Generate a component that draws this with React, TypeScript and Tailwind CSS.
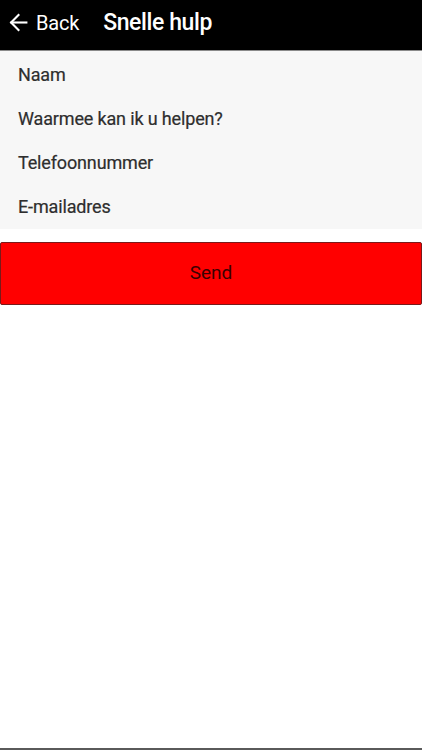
import React from "react";

export default function App() {
  const fields = ["Naam", "Waarmee kan ik u helpen?", "Telefoonnummer", "E-mailadres"];
  return (
    <div
      className="relative w-[422px] h-[750px] bg-white overflow-hidden"
      style={{ fontFamily: "Roboto, 'Liberation Sans', sans-serif" }}
    >
      <div className="h-[51px] bg-black flex items-center pb-[5px] border-b border-[#8a8a8a]">
        <div className="flex items-center pl-[8px] text-white">
          <svg width="21" height="21" viewBox="0 0 24 24" fill="none" stroke="white" strokeWidth="2.4" strokeLinecap="square">
            <path d="M21 12H4" />
            <path d="M12 3.5L3.5 12L12 20.5" />
          </svg>
          <span className="ml-[7px] text-[20px] leading-none tracking-[-0.2px]">Back</span>
        </div>
        <span className="ml-[24px] text-white text-[23px] font-medium leading-none tracking-[-0.4px]">Snelle hulp</span>
      </div>
      <div className="bg-[#f7f7f7] pt-[2px] pb-[1px]">
        {fields.map((f) => (
          <div key={f} className="h-[43.75px] flex items-center pl-[18px] text-[18px] text-[#2e2e2e] tracking-[-0.15px] [-webkit-text-stroke:0.2px_#2e2e2e]">
            {f}
          </div>
        ))}
      </div>
      <div className="mt-[13px] h-[63px] bg-[#ff0000] border border-[#7a1a1a] rounded-[2px] flex items-center justify-center text-[19px] text-[#3a0000]">
        Send
      </div>
      <div className="absolute bottom-0 left-0 w-full h-[2px] bg-[#5a5a5a]" />
    </div>
  );
}
